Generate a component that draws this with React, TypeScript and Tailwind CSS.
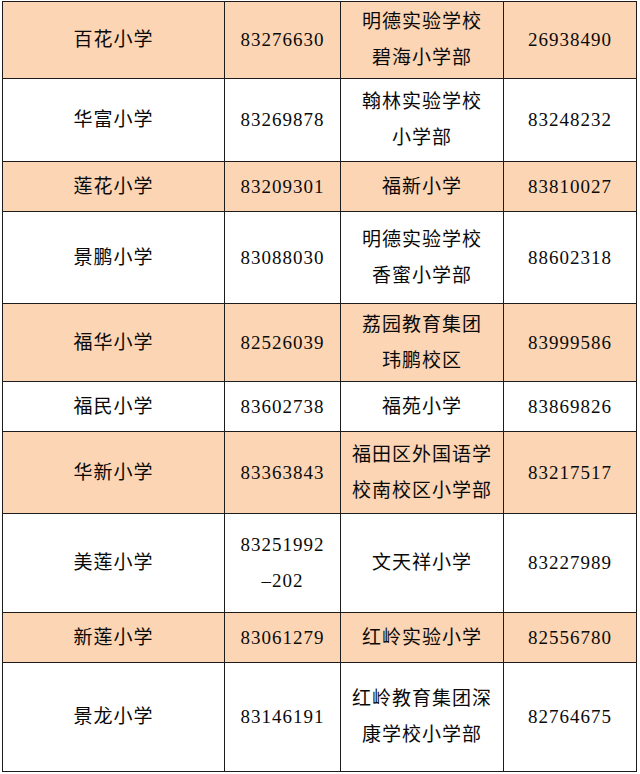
import React from 'react';

type Row = {
  a: string;
  b: string[];
  c: string[];
  d: string;
  h: string;
  peach: boolean;
};

const rows: Row[] = [
  { a: '百花小学', b: ['83276630'], c: ['明德实验学校', '碧海小学部'], d: '26938490', h: 'h-[77px]', peach: true },
  { a: '华富小学', b: ['83269878'], c: ['翰林实验学校', '小学部'], d: '83248232', h: 'h-[83px]', peach: false },
  { a: '莲花小学', b: ['83209301'], c: ['福新小学'], d: '83810027', h: 'h-[50px]', peach: true },
  { a: '景鹏小学', b: ['83088030'], c: ['明德实验学校', '香蜜小学部'], d: '88602318', h: 'h-[92px]', peach: false },
  { a: '福华小学', b: ['82526039'], c: ['荔园教育集团', '玮鹏校区'], d: '83999586', h: 'h-[78px]', peach: true },
  { a: '福民小学', b: ['83602738'], c: ['福苑小学'], d: '83869826', h: 'h-[50px]', peach: false },
  { a: '华新小学', b: ['83363843'], c: ['福田区外国语学', '校南校区小学部'], d: '83217517', h: 'h-[82px]', peach: true },
  { a: '美莲小学', b: ['83251992', '–202'], c: ['文天祥小学'], d: '83227989', h: 'h-[99px]', peach: false },
  { a: '新莲小学', b: ['83061279'], c: ['红岭实验小学'], d: '82556780', h: 'h-[50px]', peach: true },
  { a: '景龙小学', b: ['83146191'], c: ['红岭教育集团深', '康学校小学部'], d: '82764675', h: 'h-[109px]', peach: false },
];

function Cell({ lines, width, first }: { lines: string[]; width: string; first?: boolean }) {
  return (
    <div
      className={`${width} flex flex-col items-center justify-center border-r border-b border-[#1c1c1c] ${
        first ? 'border-l' : ''
      }`}
    >
      {lines.map((l, i) => (
        <div key={i} className="leading-[36px] whitespace-nowrap">
          {l}
        </div>
      ))}
    </div>
  );
}

export default function App() {
  return (
    <div className="min-h-[774px] bg-white pl-[2px] pt-[1px]">
      <div
        className="w-[635px] border-t border-[#1c1c1c] text-[19px] tracking-[1px] text-[#0a0a0a]"
        style={{ fontFamily: '"Liberation Serif", "Noto Sans CJK SC", serif' }}
      >
        {rows.map((r, i) => (
          <div key={i} className={`flex ${r.h} ${r.peach ? 'bg-[#fcd5b4]' : 'bg-white'}`}>
            <Cell lines={[r.a]} width="w-[223px]" first />
            <Cell lines={r.b} width="w-[116px]" />
            <Cell lines={r.c} width="w-[163px]" />
            <Cell lines={[r.d]} width="w-[133px]" />
          </div>
        ))}
      </div>
    </div>
  );
}
